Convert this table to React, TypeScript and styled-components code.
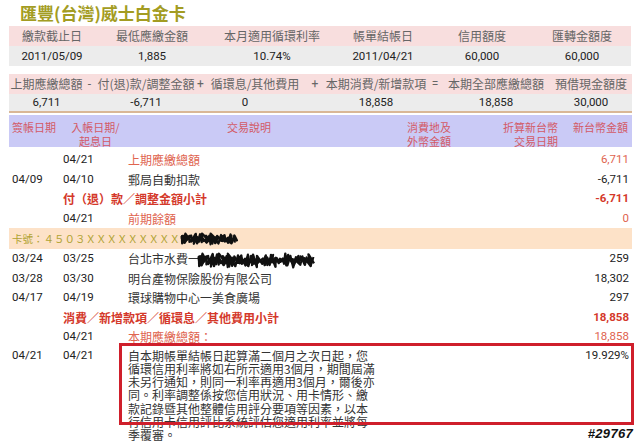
import React from 'react';
import styled, { createGlobalStyle } from 'styled-components';

const GlobalStyle = createGlobalStyle`
  html, body { margin: 0; padding: 0; background: #fff; overflow: hidden; }
  body { font-family: Roboto, "Noto Sans CJK TC", "Noto Sans", sans-serif; color: #222; }
`;

const CJK = `"Noto Sans CJK TC", "Noto Sans", sans-serif`;
const NUM = `Roboto, "Noto Sans CJK TC", sans-serif`;

const Page = styled.div`
  position: relative;
  width: 640px;
  height: 442px;
  overflow: hidden;
  padding: 0 8px 0 9px;
  box-sizing: border-box;
`;

const Title = styled.h1`
  margin: 0;
  height: 26px;
  line-height: 26px;
  padding-left: 11px;
  font-family: ${CJK};
  font-size: 17px;
  font-weight: 700;
  color: #a39c22;
`;

const SummaryGrid = styled.div<{ $cols: string; $mt?: number }>`
  display: grid;
  grid-template-columns: ${(p) => p.$cols};
  margin-top: ${(p) => p.$mt ?? 0}px;
`;

const LabelCell = styled.div<{ $op?: boolean }>`
  background: #f8dede;
  height: 20px;
  line-height: 20px;
  text-align: center;
  white-space: nowrap;
  font-family: ${(p) => (p.$op ? NUM : CJK)};
  font-size: 12px;
  color: #666;
`;

const ValueCell = styled.div<{ $short?: boolean; $pr?: number }>`
  background: #ececec;
  height: ${(p) => (p.$short ? 17 : 20)}px;
  line-height: ${(p) => (p.$short ? 17 : 20)}px;
  text-align: center;
  white-space: nowrap;
  font-family: ${NUM};
  font-size: 11.5px;
  color: #222;
  padding-right: ${(p) => p.$pr ?? 0}px;
  border-bottom: ${(p) => (p.$short ? '2px solid #d9b796' : 'none')};
`;

const TxHeader = styled.div`
  display: grid;
  grid-template-columns: 51px 65px 242px 82px 107px 70px;
  margin-top: 2px;
  padding: 5px 3px 0;
  height: 32px;
  box-sizing: border-box;
  background: #cacaf6;
  font-family: ${CJK};
  font-size: 11px;
  line-height: 14px;
  color: #d35a66;
`;

const HeadCell = styled.div<{ $align?: 'left' | 'center' | 'right' }>`
  text-align: ${(p) => p.$align ?? 'left'};
  white-space: nowrap;
  padding-right: ${(p) => (p.$align === 'right' ? 1 : 0)}px;
`;

const TxBody = styled.div`
  padding-top: 3px;
`;

const TxRow = styled.div`
  display: grid;
  grid-template-columns: 51px 65px 1fr 90px;
  align-items: center;
  height: 19.5px;
  line-height: 19.5px;
  padding: 0 3px;
`;

const LongRow = styled.div`
  position: relative;
  display: grid;
  grid-template-columns: 51px 65px 1fr 90px;
  align-items: start;
  padding: 2px 3px 0;
  line-height: 13.3px;
`;

type Tone = 'plain' | 'soft' | 'strong';
const toneColor = (t?: Tone) => (t === 'soft' ? '#e0644f' : t === 'strong' ? '#d4382a' : '#333');

const DateCell = styled.div`
  font-family: ${NUM};
  font-size: 11.5px;
  color: #222;
`;

const Desc = styled.div<{ $tone?: Tone; $wide?: boolean }>`
  grid-column: ${(p) => (p.$wide ? '2 / 4' : 'auto')};
  font-family: ${CJK};
  font-size: 12px;
  white-space: nowrap;
  color: ${(p) => toneColor(p.$tone)};
  font-weight: ${(p) => (p.$tone === 'strong' ? 700 : 400)};
`;

const Amount = styled.div<{ $tone?: Tone }>`
  grid-column: 4;
  text-align: right;
  font-family: ${NUM};
  font-size: 11.5px;
  color: ${(p) => (p.$tone ? toneColor(p.$tone) : '#222')};
  font-weight: ${(p) => (p.$tone === 'strong' ? 700 : 400)};
`;

const CardRow = styled.div`
  display: flex;
  align-items: center;
  height: 21px;
  padding: 0 3px;
  background: #fde2c8;
  font-family: ${CJK};
  font-size: 10.5px;
  color: #b0a232;
  white-space: nowrap;
`;

const Notice = styled.div`
  font-family: ${CJK};
  font-size: 12px;
  color: #333;
  width: 244px;
`;

const NoticeLine = styled.span`
  display: block;
  white-space: nowrap;
`;

const Highlight = styled.div`
  position: absolute;
  left: 110px;
  top: -3.5px;
  width: 515px;
  height: 82px;
  border: 3px solid #cf1f2b;
  box-sizing: border-box;
  pointer-events: none;
`;

const Scribble = styled.svg<{ $ml?: number }>`
  display: inline-block;
  vertical-align: middle;
  margin-left: ${(p) => p.$ml ?? 0}px;
`;

const Watermark = styled.span`
  position: absolute;
  right: 7px;
  bottom: 1px;
  font-family: "Liberation Sans", Arial, sans-serif;
  font-style: italic;
  font-weight: 900;
  font-size: 13px;
  color: #111;
  letter-spacing: 0.3px;
  text-shadow: 1px 0 0 #fff, -1px 0 0 #fff, 0 1px 0 #fff, 0 -1px 0 #fff;
`;

function scribblePath(w: number, h: number, n: number, seed: number) {
  let s = seed;
  const rnd = () => {
    s = (s * 9301 + 49297) % 233280;
    return s / 233280;
  };
  let d = `M 2 ${h / 2}`;
  for (let i = 0; i < n; i++) {
    const x = 2 + (w - 4) * (i / (n - 1)) + (rnd() - 0.5) * 5;
    const y = i % 2 === 0 ? 1.5 + rnd() * h * 0.35 : h - 1.5 - rnd() * h * 0.35;
    d += ` L ${x.toFixed(1)} ${y.toFixed(1)}`;
  }
  return d;
}

const Redaction: React.FC<{ w: number; h: number; ml?: number }> = ({ w, h, ml }) => (
  <Scribble width={w} height={h} viewBox={`0 0 ${w} ${h}`} $ml={ml}>
    <path d={scribblePath(w, h, Math.round(w / 2.2), 7)} fill="none" stroke="#111" strokeWidth={2.4} strokeLinejoin="round" />
    <path d={scribblePath(w, h, Math.round(w / 2.6), 31)} fill="none" stroke="#111" strokeWidth={2.2} strokeLinejoin="round" />
    <path d={scribblePath(w, h * 0.8, Math.round(w / 3), 113)} fill="none" stroke="#111" strokeWidth={2} strokeLinejoin="round" transform={`translate(0 ${h * 0.1})`} />
  </Scribble>
);

const summary1 = [
  ['繳款截止日', '2011/05/09'],
  ['最低應繳金額', '1,885'],
  ['本月適用循環利率', '10.74%'],
  ['帳單結帳日', '2011/04/21'],
  ['信用額度', '60,000'],
  ['匯轉金額度', '60,000'],
];

const summary2: { label: string; value: string; op?: boolean; pr?: number }[] = [
  { label: '上期應繳總額', value: '6,711' },
  { label: '-', value: '', op: true },
  { label: '付(退)款/調整金額', value: '-6,711' },
  { label: '+', value: '', op: true },
  { label: '循環息/其他費用', value: '0', pr: 20 },
  { label: '+', value: '', op: true },
  { label: '本期消費/新增款項', value: '18,858' },
  { label: '=', value: '', op: true },
  { label: '本期全部應繳總額', value: '18,858' },
  { label: '預借現金額度', value: '30,000' },
];

type Tx = { d1?: string; d2?: string; desc: string; amt: string; tone?: Tone; wide?: boolean; redact?: boolean };

const before: Tx[] = [
  { d2: '04/21', desc: '上期應繳總額', amt: '6,711', tone: 'soft' },
  { d1: '04/09', d2: '04/10', desc: '郵局自動扣款', amt: '-6,711' },
  { desc: '付（退）款／調整金額小計', amt: '-6,711', tone: 'strong', wide: true },
  { d2: '04/21', desc: '前期餘額', amt: '0', tone: 'soft' },
];

const after: Tx[] = [
  { d1: '03/24', d2: '03/25', desc: '台北市水費一', amt: '259', redact: true },
  { d1: '03/28', d2: '03/30', desc: '明台產物保險股份有限公司', amt: '18,302' },
  { d1: '04/17', d2: '04/19', desc: '環球購物中心一美食廣場', amt: '297' },
  { desc: '消費／新增款項／循環息／其他費用小計', amt: '18,858', tone: 'strong', wide: true },
  { d2: '04/21', desc: '本期應繳總額：', amt: '18,858', tone: 'soft' },
];

const notice = [
  '自本期帳單結帳日起算滿二個月之次日起，您',
  '循環信用利率將如右所示適用3個月，期間屆滿',
  '未另行通知，則同一利率再適用3個月，爾後亦',
  '同。利率調整係按您信用狀況、用卡情形、繳',
  '款記錄暨其他整體信用評分要項等因素，以本',
  '行信用卡信用評比系統評估您適用利率並將每',
  '季覆審。',
];

const TxLine: React.FC<{ tx: Tx }> = ({ tx }) => (
  <TxRow>
    {!tx.wide && <DateCell>{tx.d1 ?? ''}</DateCell>}
    {!tx.wide && <DateCell>{tx.d2 ?? ''}</DateCell>}
    {tx.wide && <DateCell />}
    <Desc $tone={tx.tone} $wide={tx.wide}>
      {tx.desc}
      {tx.redact && <Redaction w={118} h={17} ml={-3} />}
    </Desc>
    <Amount $tone={tx.tone}>{tx.amt}</Amount>
  </TxRow>
);

export default function App() {
  return (
    <>
      <GlobalStyle />
      <Page>
        <Title>匯豐(台灣)威士白金卡</Title>

        <SummaryGrid $cols="86px 114px 126px 96px 102px 98px">
          {summary1.map(([l]) => (
            <LabelCell key={l}>{l}</LabelCell>
          ))}
          {summary1.map(([l, v]) => (
            <ValueCell key={l + v}>{v}</ValueCell>
          ))}
        </SummaryGrid>

        <SummaryGrid $cols="75px 11px 102px 7px 102px 18px 104px 14px 108px 1fr" $mt={8}>
          {summary2.map((c, i) => (
            <LabelCell key={'l' + i} $op={c.op}>
              {c.label}
            </LabelCell>
          ))}
          {summary2.map((c, i) => (
            <ValueCell key={'v' + i} $short $pr={c.pr}>
              {c.value}
            </ValueCell>
          ))}
        </SummaryGrid>

        <TxHeader>
          <HeadCell>簽帳日期</HeadCell>
          <HeadCell $align="center">
            入帳日期/
            <br />
            起息日
          </HeadCell>
          <HeadCell $align="center">交易說明</HeadCell>
          <HeadCell $align="right">
            消費地及
            <br />
            外幣金額
          </HeadCell>
          <HeadCell $align="right">
            折算新台幣
            <br />
            交易日期
          </HeadCell>
          <HeadCell $align="right">新台幣金額</HeadCell>
        </TxHeader>

        <TxBody>
          {before.map((tx, i) => (
            <TxLine key={'b' + i} tx={tx} />
          ))}
          <CardRow>
            卡號：４５０３ＸＸＸＸＸＸＸＸＸ
            <Redaction w={58} h={14} ml={0} />
          </CardRow>
          {after.map((tx, i) => (
            <TxLine key={'a' + i} tx={tx} />
          ))}
          <LongRow>
            <DateCell>04/21</DateCell>
            <DateCell>04/21</DateCell>
            <Notice>
              {notice.map((line) => (
                <NoticeLine key={line}>{line}</NoticeLine>
              ))}
            </Notice>
            <Amount>19.929%</Amount>
            <Highlight />
          </LongRow>
        </TxBody>

        <Watermark>#29767</Watermark>
      </Page>
    </>
  );
}
